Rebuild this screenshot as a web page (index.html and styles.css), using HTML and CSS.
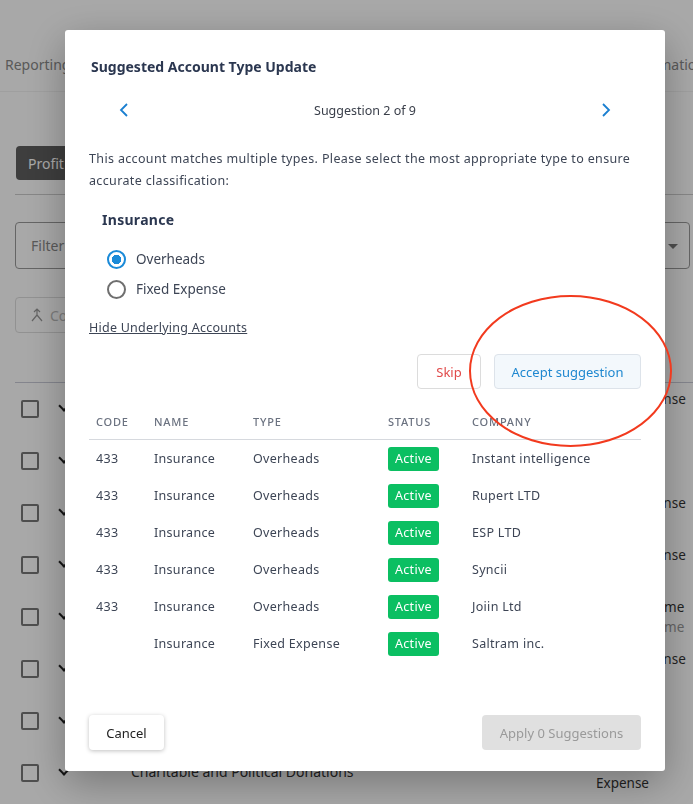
FILE: index.html
```html
<!DOCTYPE html>
<html lang="en">
<head>
    <meta charset="UTF-8">
    <meta name="viewport" content="width=device-width, initial-scale=1.0">
    <title>Suggested Account Type Update</title>
    <link rel="stylesheet" href="styles.css">
</head>
<body>
    <div class="page">
        <nav class="tabs">
            <span class="tab">Reporting</span>
            <span class="tab tab-right">Information</span>
        </nav>

        <div class="report-bar">
            <button class="dark-btn">Profit &amp; Loss</button>
        </div>

        <div class="filter-row">
            <div class="filter-input">Filter accounts</div>
            <div class="filter-select"><span class="caret"></span></div>
        </div>

        <div class="action-row">
            <button class="ghost-btn">
                <svg width="14" height="14" viewBox="0 0 14 14" fill="none" stroke="#999" stroke-width="1.2"><path d="M7 1v6M4 4l3-3 3 3M7 7l-5 6M7 7l5 6"/></svg>
                Combine
            </button>
        </div>

        <div class="account-list">
            <div class="account-row"><span class="check"></span><span class="chev"></span><span class="acc-name">Insurance</span><span class="acc-type">Fixed Expense<br><em>Expense</em></span></div>
            <div class="account-row"><span class="check"></span><span class="chev"></span><span class="acc-name">Sales</span><span class="acc-type">Revenue<br><em>Income</em></span></div>
            <div class="account-row"><span class="check"></span><span class="chev"></span><span class="acc-name">Light, Power, Heating</span><span class="acc-type">Fixed Expense<br><em>Expense</em></span></div>
            <div class="account-row"><span class="check"></span><span class="chev"></span><span class="acc-name">Telephone &amp; Internet</span><span class="acc-type">Fixed Expense<br><em>Expense</em></span></div>
            <div class="account-row"><span class="check"></span><span class="chev"></span><span class="acc-name">Interest Income</span><span class="acc-type">Other Income<br><em>Other Income</em></span></div>
            <div class="account-row"><span class="check"></span><span class="chev"></span><span class="acc-name">Subscriptions</span><span class="acc-type">Fixed Expense<br><em>Expense</em></span></div>
            <div class="account-row"><span class="check"></span><span class="chev"></span><span class="acc-name">Bank Fees</span><span class="acc-type">Overhead<br><em>Cost</em></span></div>
            <div class="account-row"><span class="check"></span><span class="chev"></span><span class="acc-name">Charitable and Political Donations</span><span class="acc-type">Fixed<br>Expense</span></div>
        </div>
    </div>

    <div class="overlay"></div>

    <div class="modal">
        <h2 class="modal-title">Suggested Account Type Update</h2>

        <div class="pager">
            <svg class="pager-arrow" width="12" height="16" viewBox="0 0 12 16" fill="none" stroke="#1a7fd0" stroke-width="1.8"><path d="M9 2L3 8l6 6"/></svg>
            <span class="pager-label">Suggestion 2 of 9</span>
            <svg class="pager-arrow" width="12" height="16" viewBox="0 0 12 16" fill="none" stroke="#1a7fd0" stroke-width="1.8"><path d="M3 2l6 6-6 6"/></svg>
        </div>

        <p class="intro">This account matches multiple types. Please select the most appropriate type to ensure accurate classification:</p>

        <h3 class="account-name">Insurance</h3>
        <div class="radio-group">
            <label class="radio-row"><span class="radio checked"></span>Overheads</label>
            <label class="radio-row"><span class="radio"></span>Fixed Expense</label>
        </div>

        <a class="toggle-link" href="#">Hide Underlying Accounts</a>

        <div class="decision">
            <button class="btn btn-skip">Skip</button>
            <button class="btn btn-accept">Accept suggestion</button>
        </div>

        <table class="accounts">
            <thead>
                <tr><th class="c-code">Code</th><th class="c-name">Name</th><th class="c-type">Type</th><th class="c-status">Status</th><th>Company</th></tr>
            </thead>
            <tbody>
                <tr><td>433</td><td>Insurance</td><td>Overheads</td><td><span class="badge">Active</span></td><td>Instant intelligence</td></tr>
                <tr><td>433</td><td>Insurance</td><td>Overheads</td><td><span class="badge">Active</span></td><td>Rupert LTD</td></tr>
                <tr><td>433</td><td>Insurance</td><td>Overheads</td><td><span class="badge">Active</span></td><td>ESP LTD</td></tr>
                <tr><td>433</td><td>Insurance</td><td>Overheads</td><td><span class="badge">Active</span></td><td>Syncii</td></tr>
                <tr><td>433</td><td>Insurance</td><td>Overheads</td><td><span class="badge">Active</span></td><td>Joiin Ltd</td></tr>
                <tr><td></td><td>Insurance</td><td>Fixed Expense</td><td><span class="badge">Active</span></td><td>Saltram inc.</td></tr>
            </tbody>
        </table>

        <div class="modal-footer">
            <button class="btn btn-cancel">Cancel</button>
            <button class="btn btn-apply" disabled>Apply 0 Suggestions</button>
        </div>
    </div>

    <div class="highlight"></div>
</body>
</html>
```

FILE: styles.css
```css
body {
    margin: 0;
    font-family: "Noto Sans", "Open Sans", sans-serif;
    background-color: #ffffff;
    color: #333;
    overflow: hidden;
    height: 804px;
}

/* background page */
.page {
    width: 693px;
}
.tabs {
    display: flex;
    justify-content: space-between;
    padding: 55px 0 0 5px;
    height: 36px;
    border-bottom: 1px solid #f2f2f2;
    font-size: 14px;
    color: #888;
}
.tab-right {
    margin-right: -12px;
}
.report-bar {
    margin-left: 15px;
    padding: 54px 0 14px;
    border-bottom: 1px solid #ccc;
}
.dark-btn {
    background-color: #5e5e5e;
    color: #fff;
    border: none;
    border-radius: 4px;
    font-family: inherit;
    font-size: 14px;
    height: 34px;
    padding: 0 12px;
    margin-left: 1px;
}
.filter-row {
    display: flex;
    justify-content: space-between;
    padding: 27px 3px 0 15px;
}
.filter-input {
    width: 300px;
    height: 45px;
    border: 1px solid #999;
    border-radius: 4px;
    font-size: 14px;
    color: #888;
    line-height: 45px;
    padding-left: 15px;
}
.filter-select {
    width: 200px;
    height: 45px;
    border: 1px solid #999;
    border-radius: 4px;
    position: relative;
}
.caret {
    position: absolute;
    right: 11px;
    top: 21px;
    border-left: 5px solid transparent;
    border-right: 5px solid transparent;
    border-top: 5px solid #777;
}
.action-row {
    padding: 28px 0 49px;
    border-bottom: 1px solid #c8cad6;
    margin-left: 15px;
}
.ghost-btn {
    display: flex;
    align-items: center;
    gap: 6px;
    height: 36px;
    padding: 0 14px;
    border: 1px solid #ddd;
    border-radius: 4px;
    background: #fff;
    color: #bbb;
    font-family: inherit;
    font-size: 14px;
}
.account-row {
    display: flex;
    align-items: center;
    height: 52px;
    font-size: 13px;
    color: #333;
}
.check {
    width: 14px;
    height: 14px;
    border: 2px solid #777;
    border-radius: 2px;
    margin-left: 21px;
}
.chev {
    width: 6px;
    height: 6px;
    border-right: 2px solid #222;
    border-bottom: 2px solid #222;
    transform: rotate(45deg);
    margin: -6px 0 0 21px;
}
.acc-name {
    margin-left: 63px;
    width: 465px;
    font-size: 14px;
    line-height: 18px;
    margin-top: -2px;
}
.acc-type {
    line-height: 20px;
    font-size: 13.5px;
}
.acc-type em {
    font-style: normal;
    color: #999;
}

.overlay {
    position: fixed;
    inset: 0;
    background-color: rgba(0, 0, 0, 0.34);
}

/* modal */
.modal {
    position: fixed;
    left: 65px;
    top: 30px;
    width: 552px;
    padding: 27px 24px 21px;
    background-color: #fff;
    border-radius: 3px;
    box-shadow: 0 12px 40px rgba(0, 0, 0, 0.3);
    color: #3d4555;
}
.modal-title {
    margin: 0 0 0 2px;
    font-size: 14px;
    line-height: 20px;
    font-weight: 700;
    color: #2b3750;
}
.pager {
    display: flex;
    align-items: center;
    justify-content: space-between;
    height: 24px;
    margin-top: 21px;
    padding: 0 29px;
}
.pager-label {
    font-size: 12.5px;
    color: #3a3f4a;
}
.intro {
    margin: 26px 0 0;
    font-size: 12.5px;
    line-height: 22px;
    letter-spacing: 0.35px;
}
.account-name {
    margin: 18px 0 0 13px;
    font-size: 14px;
    line-height: 20px;
    font-weight: 700;
    color: #2b3750;
    letter-spacing: 0.3px;
}
.radio-group {
    margin: 14px 0 0 18px;
}
.radio-row {
    display: flex;
    align-items: center;
    gap: 10px;
    height: 30px;
    font-size: 13.5px;
    color: #3d4555;
}
.radio {
    box-sizing: border-box;
    width: 19px;
    height: 19px;
    border: 2px solid #6f6f6f;
    border-radius: 50%;
}
.radio.checked {
    border-color: #1a8ad8;
    background: radial-gradient(circle, #1a8ad8 0 4.5px, #fff 5px);
}
.toggle-link {
    display: block;
    margin-top: 14px;
    font-size: 12.5px;
    line-height: 20px;
    color: #3d4555;
    letter-spacing: 0.25px;
}
.decision {
    display: flex;
    justify-content: flex-end;
    gap: 13px;
    margin-top: 16px;
}
.btn {
    height: 35px;
    border-radius: 4px;
    font-family: inherit;
    font-size: 13px;
    cursor: pointer;
}
.btn-skip {
    width: 64px;
    background: #fff;
    border: 1px solid #dcdcdc;
    color: #e14a4a;
}
.btn-accept {
    width: 147px;
    background: #f3f8fc;
    border: 1px solid #dde3ea;
    color: #1f88d0;
}
.accounts {
    width: 100%;
    margin-top: 16px;
    border-collapse: collapse;
    font-size: 12.5px;
    letter-spacing: 0.3px;
}
.accounts th {
    height: 32px;
    padding: 0 0 2px 7px;
    text-align: left;
    font-size: 11px;
    font-weight: 500;
    text-transform: uppercase;
    letter-spacing: 0.8px;
    color: #6b7280;
    border-bottom: 1px solid #d6d9de;
}
.accounts td {
    height: 37px;
    padding: 0 0 0 7px;
}
.c-code { width: 51px; }
.c-name { width: 92px; }
.c-type { width: 128px; }
.c-status { width: 77px; }
.badge {
    display: inline-block;
    width: 51px;
    height: 24px;
    line-height: 24px;
    text-align: center;
    border-radius: 3px;
    background-color: #0bbf62;
    color: #fff;
}
.modal-footer {
    display: flex;
    justify-content: space-between;
    margin-top: 53px;
}
.btn-cancel {
    width: 75px;
    background: #fff;
    border: none;
    color: #222;
    box-shadow: 0 1px 4px rgba(0, 0, 0, 0.25);
}
.btn-apply {
    width: 159px;
    background: #e0e0e0;
    border: none;
    color: #9a9a9a;
}

.highlight {
    position: fixed;
    left: 469px;
    top: 295px;
    width: 199px;
    height: 148px;
    border: 2px solid #f23a1e;
    border-radius: 50%;
}
```
